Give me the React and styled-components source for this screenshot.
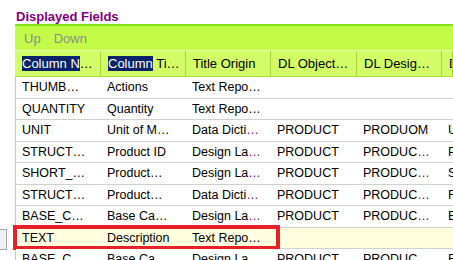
import styled, { createGlobalStyle } from 'styled-components';

const GlobalStyle = createGlobalStyle`
  html, body {
    margin: 0;
    padding: 0;
    background: #ffffff;
    overflow: hidden;
    font-family: "Liberation Sans", Arial, sans-serif;
  }
`;

const columns = ['Column N', 'Column Ti', 'Title Origin', 'DL Object…', 'DL Desig…', 'D'];

// each cell: [text, ellipsis colour or null]
const rows = [
  [['THUMB', 'k'], ['Actions'], ['Text Repo', 'k'], [''], [''], ['']],
  [['QUANTITY'], ['Quantity'], ['Text Repo', 'k'], [''], [''], ['']],
  [['UNIT'], ['Unit of M', 'k'], ['Data Dicti', 'p'], ['PRODUCT'], ['PRODUOM'], ['U']],
  [['STRUCT', 'k'], ['Product ID'], ['Design La', 'p'], ['PRODUCT'], ['PRODUC', 'p'], ['P']],
  [['SHORT_', 'k'], ['Product', 'k'], ['Design La', 'p'], ['PRODUCT'], ['PRODUC', 'p'], ['S']],
  [['STRUCT', 'k'], ['Product', 'k'], ['Data Dicti', 'p'], ['PRODUCT'], ['PRODUC', 'p'], ['F']],
  [['BASE_C', 'k'], ['Base Ca', 'k'], ['Design La', 'p'], ['PRODUCT'], ['PRODUC', 'p'], ['B']],
  [['TEXT'], ['Description'], ['Text Repo', 'k'], [''], [''], [''], 'selected'],
  [['BASE_C', 'k'], ['Base Ca', 'k'], ['Design La', 'p'], ['PRODUCT'], ['PRODUC', 'p'], ['B']],
];

export default function App() {
  return (
    <>
      <GlobalStyle />
      <Page>
        <Gutter>
          <StubButton />
        </Gutter>
        <Main>
          <Title>Displayed Fields</Title>
          <Panel>
            <Toolbar>
              <ToolButton>Up</ToolButton>
              <ToolButton>Down</ToolButton>
            </Toolbar>
            <HeaderRow>
              <HeadCell>
                <Marked>Column N</Marked>…
              </HeadCell>
              <HeadCell>
                <Marked>Column</Marked> Ti…
              </HeadCell>
              {columns.slice(2).map((c) => (
                <HeadCell key={c}>{c}</HeadCell>
              ))}
            </HeaderRow>
            <Body>
              {rows.map((row, i) => (
                <Row key={i} $selected={row[6] === 'selected'}>
                  {row.slice(0, 6).map(([text, ell], j) => (
                    <Cell key={j}>
                      {text}
                      {ell && <Ell $purple={ell === 'p'}>…</Ell>}
                    </Cell>
                  ))}
                  {row[6] === 'selected' && <Focus />}
                </Row>
              ))}
            </Body>
          </Panel>
        </Main>
      </Page>
    </>
  );
}

const Page = styled.div`
  display: flex;
  height: 260px;
  overflow: hidden;
`;

const Gutter = styled.div`
  width: 15px;
  flex: none;
  display: flex;
  flex-direction: column;
  justify-content: flex-end;
  padding-bottom: 10px;
  box-sizing: border-box;
`;

const StubButton = styled.div`
  width: 8px;
  height: 21px;
  margin-left: -1px;
  background: #f0f0f0;
  border: 1px solid #a8a8a8;
  border-left: none;
  box-sizing: border-box;
`;

const Main = styled.div`
  flex: 1;
  display: flex;
  flex-direction: column;
  min-width: 0;
`;

const Title = styled.div`
  height: 25px;
  padding: 9px 0 0 1px;
  box-sizing: border-box;
  font-size: 13px;
  font-weight: bold;
  line-height: 15px;
  color: #800080;
`;

const Panel = styled.div`
  border-top: 2px solid #84e414;
  display: flex;
  flex-direction: column;
`;

const Toolbar = styled.div`
  height: 24px;
  display: flex;
  align-items: center;
  gap: 13px;
  padding-left: 9px;
  background: #c2fb48;
  border-bottom: 1px solid #e6ffb0;
`;

const ToolButton = styled.span`
  font-size: 13px;
  color: #8c8c8c;
`;

const HeaderRow = styled.div`
  display: grid;
  grid-template-columns: 86px 85px 85px 86px 85px 1fr;
  height: 26px;
  background: #d2fd66;
  border-bottom: 1px solid #a6e43c;
  box-sizing: border-box;
`;

const HeadCell = styled.div`
  padding-left: 7px;
  font-size: 13px;
  line-height: 25px;
  color: #000000;
  white-space: nowrap;
  overflow: hidden;
  border-right: 1px solid #9ed83a;
`;

const Marked = styled.span`
  background: #0a246a;
  color: #ffffff;
`;

const Body = styled.div`
  border-left: 1px solid #c8c8c8;
`;

const Row = styled.div`
  position: relative;
  display: grid;
  grid-template-columns: 85px 85px 85px 86px 85px 1fr;
  height: 21.5px;
  box-sizing: border-box;
  border-bottom: 1px solid #d0d0d0;
  background: ${({ $selected }) => ($selected ? '#ffffe0' : '#ffffff')};
`;

const Cell = styled.div`
  display: flex;
  align-items: center;
  padding-left: 6px;
  font-size: 12.5px;
  color: #000000;
  white-space: nowrap;
  overflow: hidden;
`;

const Ell = styled.span`
  color: ${({ $purple }) => ($purple ? '#800080' : '#000000')};
`;

const Focus = styled.div`
  position: absolute;
  left: -3px;
  top: -3px;
  width: 267px;
  bottom: -2px;
  border: 4px solid #e8202a;
  box-sizing: border-box;
  pointer-events: none;
`;
